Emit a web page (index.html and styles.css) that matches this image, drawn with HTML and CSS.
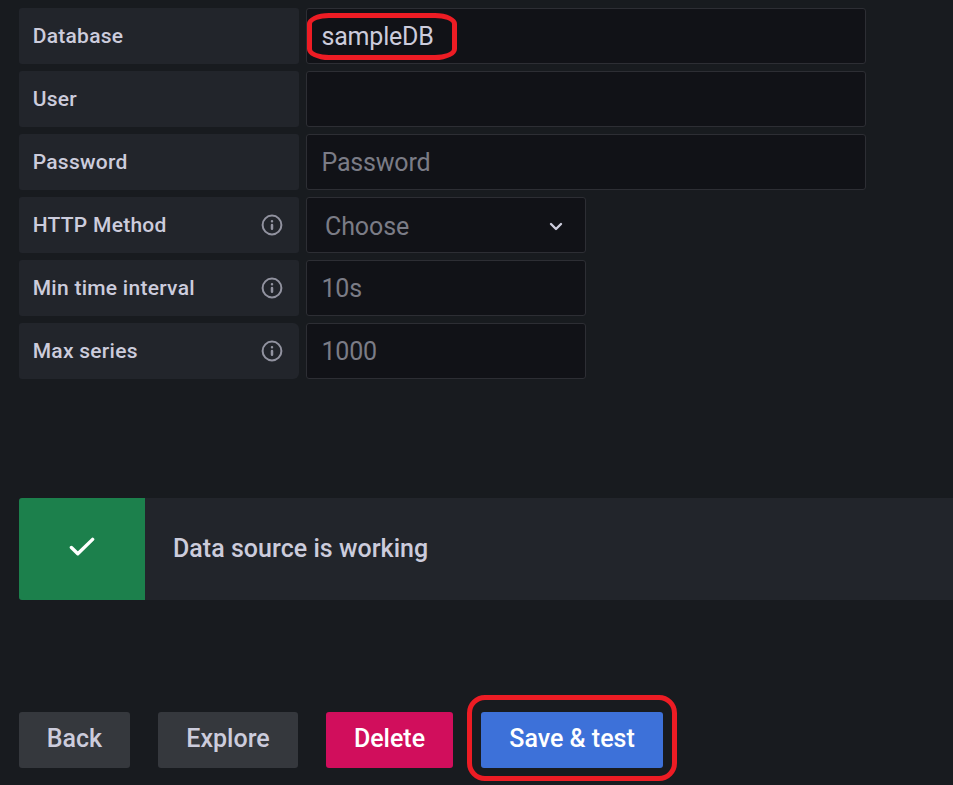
FILE: index.html
```html
<!DOCTYPE html>
<html lang="en">
<head>
<meta charset="utf-8">
<title>Data source settings</title>
<link rel="stylesheet" href="styles.css">
</head>
<body>
<main class="page">
  <section class="form">
    <div class="row"><div class="label">Database</div><div class="field wide value">sampleDB<span class="mark mark-db"></span></div></div>
    <div class="row"><div class="label">User</div><div class="field wide"></div></div>
    <div class="row"><div class="label">Password</div><div class="field wide">Password</div></div>
    <div class="row"><div class="label">HTTP Method<svg class="info" viewBox="0 0 22 22"><circle cx="11" cy="11" r="9.4"/><path d="M11 11v3.7M11 7.2v.1"/></svg></div><div class="field select">Choose<svg class="chevron" viewBox="0 0 14 10"><path d="M2 2l5 5 5-5"/></svg></div></div>
    <div class="row"><div class="label">Min time interval<svg class="info" viewBox="0 0 22 22"><circle cx="11" cy="11" r="9.4"/><path d="M11 11v3.7M11 7.2v.1"/></svg></div><div class="field">10s</div></div>
    <div class="row"><div class="label last">Max series<svg class="info" viewBox="0 0 22 22"><circle cx="11" cy="11" r="9.4"/><path d="M11 11v3.7M11 7.2v.1"/></svg></div><div class="field">1000</div></div>
  </section>
  <section class="alert">
    <div class="status"><svg class="check" viewBox="0 0 26 20"><path d="M2.4 10.5l6.4 6.3L23.6 2.4"/></svg></div>
    <div class="message">Data source is working</div>
  </section>
  <div class="actions">
    <button class="btn back">Back</button>
    <button class="btn explore">Explore</button>
    <button class="btn delete">Delete</button>
    <button class="btn save">Save &amp; test<span class="mark mark-save"></span></button>
  </div>
</main>
</body>
</html>
```
FILE: styles.css
```css
* { box-sizing: border-box; }
body { margin: 0; background: #181b1f; color: #ccccdc; font-family: Roboto, "Liberation Sans", sans-serif; overflow: hidden; }
.page { height: 785px; padding: 8px 0 0 19px; overflow: hidden; }
.form { display: flex; flex-direction: column; gap: 7px; }
.row { display: flex; gap: 7px; height: 56px; }
.label { width: 280px; padding: 0 16px 0 13.7px; display: flex; align-items: center; justify-content: space-between; background: #22252b; border-radius: 3px; font-size: 21px; font-weight: 500; letter-spacing: 0.27px; }
.last { border-radius: 3px 6px 6px 3px; }
.info { width: 22px; height: 22px; fill: none; stroke: #9293a0; stroke-width: 2; stroke-linecap: round; }
.info path { stroke-width: 2.5; }
.field { position: relative; width: 280px; padding: 0 14.5px; display: flex; align-items: center; background: #111217; border: 1px solid #2d2e34; border-radius: 3px; color: #7b7c86; font-size: 25px; letter-spacing: -0.2px; }
.wide { width: 560px; }
.value { color: #ccccdc; }
.select { justify-content: space-between; padding: 3px 22px 0 18px; letter-spacing: -0.1px; }
.chevron { width: 14px; height: 10px; fill: none; stroke: #ccccdc; stroke-width: 2.4; stroke-linecap: round; stroke-linejoin: round; }
.alert { display: flex; height: 102px; margin-top: 119px; background: #22252b; border-radius: 3px 0 0 3px; overflow: hidden; }
.status { width: 126px; padding-bottom: 4px; display: flex; align-items: center; justify-content: center; background: #1c804c; }
.check { width: 26px; height: 20px; fill: none; stroke: #fff; stroke-width: 3.4; stroke-linecap: round; stroke-linejoin: round; }
.message { padding: 0 0 2px 28px; display: flex; align-items: center; font-size: 25px; font-weight: 500; letter-spacing: 0.03px; }
.actions { display: flex; gap: 28px; margin-top: 112px; }
.btn { position: relative; height: 56px; padding: 0 0 3px; border: 0; border-radius: 3px; background: #35383d; color: #ccccdc; font: 500 25px Roboto, "Liberation Sans", sans-serif; white-space: nowrap; }
.back { width: 111px; }
.explore { width: 140px; }
.delete { width: 127px; background: #d10e5c; color: #fff; }
.save { width: 182px; background: #3d71d9; color: #fff; }
.mark { position: absolute; border: 5px solid #ed1c24; pointer-events: none; }
.mark-db { left: 0; top: 4px; width: 150px; height: 47px; border-radius: 22px / 11px; }
.mark-save { left: -14px; top: -17px; width: 210px; height: 86px; border-radius: 18px; }
```
